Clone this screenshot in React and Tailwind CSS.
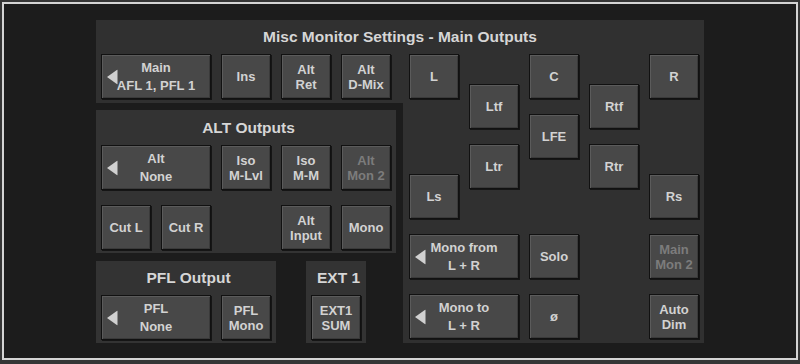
import React from 'react';

const font = "font-['Liberation_Sans',Arial,Helvetica,sans-serif]";

// one console button; "wide" ones carry the left arrow and a bit more leading
const Btn = ({ lines, wide, off, className = '' }) => (
  <div
    className={`relative flex h-[45px] flex-col items-center justify-center border border-[#111] bg-[#484848] shadow-[inset_1px_1px_0_#5b5b5b,inset_-1px_-1px_0_#3a3a3a,1px_1px_0_#151515] text-[13px] font-bold ${
      wide ? 'w-[110px] leading-[17.5px]' : 'w-[50px] leading-[15px]'
    } ${off ? 'text-[#7c7c7c]' : 'text-[#d2d2d2]'} ${className}`}
  >
    {wide && (
      <svg className="absolute left-[5px] top-1/2 -translate-y-1/2" width="11" height="15" viewBox="0 0 11 15">
        <polygon points="0,7.5 10.5,0 10.5,15" fill="#d0d0d0" />
      </svg>
    )}
    {lines.map((l) => (
      <span key={l} className="whitespace-nowrap">{l}</span>
    ))}
  </div>
);

const Title = ({ children, className = '' }) => (
  <div className={`flex items-center justify-center text-[15.5px] font-bold text-[#d6d6d6] ${className}`}>
    {children}
  </div>
);

export default function App() {
  return (
    <div className={`h-[364px] w-[800px] overflow-hidden bg-[#353535] pl-[2px] pt-[2px] ${font}`}>
      <div className="h-[358px] w-[796px] border-2 border-[#d4d4d4] bg-[#1c1c1c] pl-[92px] pt-[16px]">
        <div className="flex h-[323px] w-[608px] flex-col">
          {/* Misc Monitor Settings header */}
          <Title className="h-[34px] bg-[#303030]">Misc Monitor Settings - Main Outputs</Title>

          <div className="flex flex-1">
            {/* left column */}
            <div className="flex w-[307px] flex-col">
              <div className="flex h-[49px] gap-[10px] bg-[#303030] pl-[5px]">
                <Btn wide lines={['Main', 'AFL 1, PFL 1']} />
                <Btn lines={['Ins']} />
                <Btn lines={['Alt', 'Ret']} />
                <Btn lines={['Alt', 'D-Mix']} />
              </div>

              <div className="flex flex-1 flex-col gap-[8px] pt-[7px]">
                {/* ALT Outputs */}
                <div className="h-[143px] w-[300px] bg-[#333] pl-[5px]">
                  <Title className="h-[35px]">ALT Outputs</Title>
                  <div className="grid grid-cols-[repeat(5,50px)] grid-rows-[45px_45px] gap-x-[10px] gap-y-[15px]">
                    <Btn wide lines={['Alt', 'None']} className="col-span-2 col-start-1" />
                    <Btn lines={['Iso', 'M-Lvl']} className="col-start-3" />
                    <Btn lines={['Iso', 'M-M']} className="col-start-4" />
                    <Btn off lines={['Alt', 'Mon 2']} className="col-start-5" />
                    <Btn lines={['Cut L']} className="col-start-1 row-start-2" />
                    <Btn lines={['Cut R']} className="col-start-2 row-start-2" />
                    <Btn lines={['Alt', 'Input']} className="col-start-4 row-start-2" />
                    <Btn lines={['Mono']} className="col-start-5 row-start-2" />
                  </div>
                </div>

                <div className="flex gap-[30px]">
                  {/* PFL Output */}
                  <div className="h-[82px] w-[180px] bg-[#333] pl-[5px]">
                    <Title className="h-[34px]">PFL Output</Title>
                    <div className="flex gap-[10px]">
                      <Btn wide lines={['PFL', 'None']} />
                      <Btn lines={['PFL', 'Mono']} />
                    </div>
                  </div>
                  {/* EXT 1 */}
                  <div className="h-[82px] w-[60px] bg-[#333] pl-[5px]">
                    <Title className="h-[34px]">EXT 1</Title>
                    <Btn lines={['EXT1', 'SUM']} />
                  </div>
                </div>
              </div>
            </div>

            {/* speaker layout */}
            <div className="flex-1 bg-[#303030] pl-[6px]">
              <div className="grid grid-cols-[repeat(5,50px)] grid-rows-[repeat(19,15px)] gap-x-[10px]">
                <Btn lines={['L']} className="col-start-1 row-span-3 row-start-1" />
                <Btn lines={['C']} className="col-start-3 row-span-3 row-start-1" />
                <Btn lines={['R']} className="col-start-5 row-span-3 row-start-1" />
                <Btn lines={['Ltf']} className="col-start-2 row-span-3 row-start-3" />
                <Btn lines={['Rtf']} className="col-start-4 row-span-3 row-start-3" />
                <Btn lines={['LFE']} className="col-start-3 row-span-3 row-start-5" />
                <Btn lines={['Ltr']} className="col-start-2 row-span-3 row-start-7" />
                <Btn lines={['Rtr']} className="col-start-4 row-span-3 row-start-7" />
                <Btn lines={['Ls']} className="col-start-1 row-span-3 row-start-9" />
                <Btn lines={['Rs']} className="col-start-5 row-span-3 row-start-9" />
                <Btn wide lines={['Mono from', 'L + R']} className="col-span-2 col-start-1 row-span-3 row-start-13" />
                <Btn lines={['Solo']} className="col-start-3 row-span-3 row-start-13" />
                <Btn off lines={['Main', 'Mon 2']} className="col-start-5 row-span-3 row-start-13" />
                <Btn wide lines={['Mono to', 'L + R']} className="col-span-2 col-start-1 row-span-3 row-start-17" />
                <Btn lines={['ø']} className="col-start-3 row-span-3 row-start-17" />
                <Btn lines={['Auto', 'Dim']} className="col-start-5 row-span-3 row-start-17" />
              </div>
            </div>
          </div>
        </div>
      </div>
    </div>
  );
}
